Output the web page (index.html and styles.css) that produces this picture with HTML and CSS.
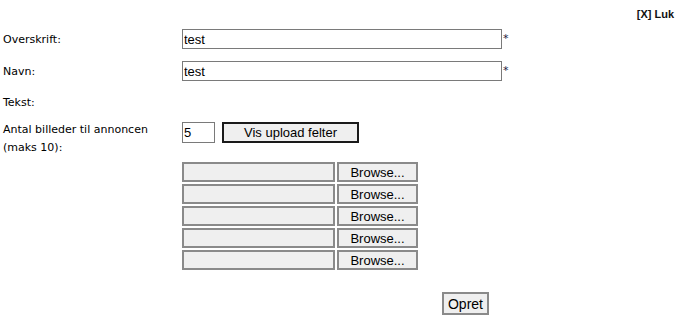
FILE: index.html
```html
<!DOCTYPE html>
<html>
<head>
<meta charset="utf-8">
<link rel="stylesheet" href="styles.css">
</head>
<body>
<div class="topbar"><a class="close" href="#">[X] Luk</a></div>
<form class="form">
  <div class="row">
    <label class="lbl">Overskrift:</label>
    <div class="field"><input class="txt" type="text" value="test"><span class="req">*</span></div>
  </div>
  <div class="row">
    <label class="lbl">Navn:</label>
    <div class="field"><input class="txt" type="text" value="test"><span class="req">*</span></div>
  </div>
  <div class="row row-tekst">
    <label class="lbl">Tekst:</label>
    <div class="field"></div>
  </div>
  <div class="row row-antal">
    <label class="lbl">Antal billeder til annoncen (maks 10):</label>
    <div class="field field-top"><input class="num" type="text" value="5"><button type="button" class="btn-vis">Vis upload felter</button></div>
  </div>
  <div class="files">
    <div class="file"><span class="fbox"></span><button type="button" class="browse">Browse...</button></div>
    <div class="file"><span class="fbox"></span><button type="button" class="browse">Browse...</button></div>
    <div class="file"><span class="fbox"></span><button type="button" class="browse">Browse...</button></div>
    <div class="file"><span class="fbox"></span><button type="button" class="browse">Browse...</button></div>
    <div class="file"><span class="fbox"></span><button type="button" class="browse">Browse...</button></div>
  </div>
  <div class="submit"><button type="button" class="opret">Opret</button></div>
</form>
</body>
</html>
```

FILE: styles.css
```css
html, body { margin: 0; padding: 0; background: #fff; }
body { font-family: "DejaVu Sans", Verdana, sans-serif; font-size: 11px; color: #000; }
.topbar { display: flex; justify-content: flex-end; padding: 8px 5px 0 0; height: 14px; }
.close { font-family: "Liberation Sans", Arial, sans-serif; font-weight: bold; font-size: 11px; color: #111; text-decoration: none; }
.form { padding: 7px 0 0 3px; }
.row { display: flex; align-items: center; margin-bottom: 12px; }
.lbl { width: 179px; flex: none; line-height: 18px; padding-top: 2px; }
.field { display: flex; align-items: center; }
.txt { box-sizing: border-box; width: 320px; height: 20px; border: 1px solid #7a7a7a; padding: 0 1px; margin: 0; font-family: "Liberation Sans", Arial, sans-serif; font-size: 13px; color: #000; background: #fff; outline: none; }
.req { font-size: 11px; margin-left: 1px; line-height: 10px; color: #1a1a3a; }
.row-tekst { height: 18px; margin-bottom: 10px; }
.row-antal { align-items: flex-start; margin-bottom: 5px; }
.row-antal .lbl { padding-top: 0; }
.field-top { padding-top: 1px; }
.num { box-sizing: border-box; width: 33px; height: 21px; border: 1px solid #7a7a7a; padding: 0 1px; margin: 0; font-family: "Liberation Sans", Arial, sans-serif; font-size: 13px; background: #fff; outline: none; }
.btn-vis { box-sizing: border-box; width: 137px; height: 21px; margin: -1px 0 0 7px; border: 2px solid #1a1a1a; background: #efefef; font-family: "Liberation Sans", Arial, sans-serif; font-size: 13px; padding: 0; color: #000; }
.files { padding-left: 179px; display: flex; flex-direction: column; gap: 2px; }
.file { display: flex; gap: 2px; }
.fbox { box-sizing: border-box; width: 153px; height: 20px; border: 2px solid #8a8a8a; background: #efefef; }
.browse { box-sizing: border-box; width: 81px; height: 20px; border: 2px solid #8a8a8a; background: #efefef; font-family: "Liberation Sans", Arial, sans-serif; font-size: 13px; padding: 0; color: #000; margin: 0; }
.submit { padding: 22px 0 0 439px; }
.opret { box-sizing: border-box; width: 47px; height: 23px; border: 2px solid #8a8a8a; background: #efefef; font-family: "Liberation Sans", Arial, sans-serif; font-size: 14px; padding: 0; color: #000; }
```
